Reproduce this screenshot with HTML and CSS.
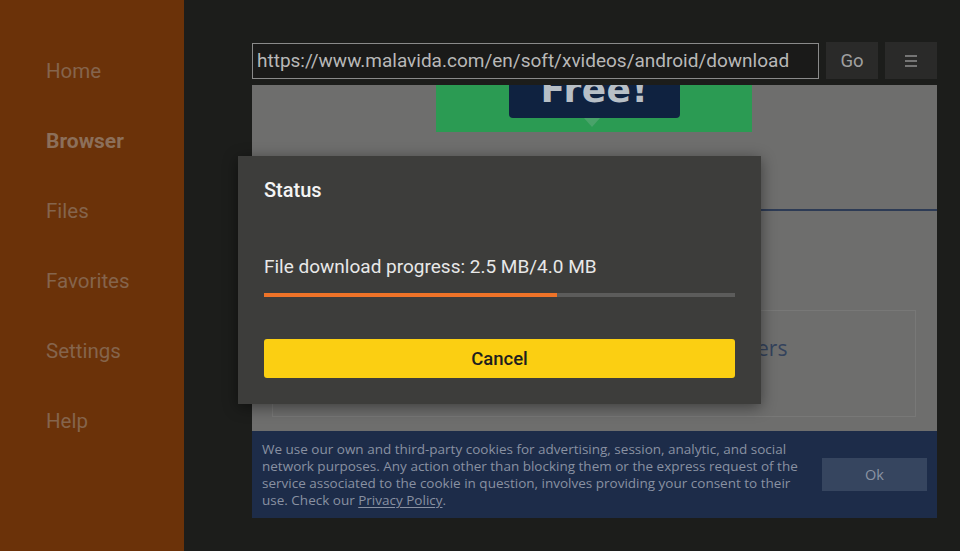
FILE: index.html
```html
<!DOCTYPE html>
<html lang="en">
<head>
<meta charset="utf-8">
<title>Downloader</title>
<link rel="stylesheet" href="styles.css">
</head>
<body>
<div class="app">
  <nav class="sidebar">
    <div class="nav-item">Home</div>
    <div class="nav-item active">Browser</div>
    <div class="nav-item">Files</div>
    <div class="nav-item">Favorites</div>
    <div class="nav-item">Settings</div>
    <div class="nav-item">Help</div>
  </nav>
  <main class="main">
    <div class="toolbar">
      <div class="url">https://www.malavida.com/en/soft/xvideos/android/download</div>
      <div class="tbtn">Go</div>
      <div class="tbtn">
        <svg width="14" height="14" viewBox="0 0 14 14"><path d="M1 2h12M1 7h12M1 12h12" stroke="#8f8f8f" stroke-width="1.6"/></svg>
      </div>
    </div>
    <div class="webview">
      <div class="banner">
        <div class="free"><span>Free!</span></div>
        <div class="tick"></div>
      </div>
      <div class="rule"></div>
      <div class="card"><span class="card-title">Browsers</span></div>
      <div class="cookies">
        <p class="cookie-text">We use our own and third-party cookies for advertising, session, analytic, and social network purposes. Any action other than blocking them or the express request of the service associated to the cookie in question, involves providing your consent to their use. Check our <u>Privacy Policy</u>.</p>
        <div class="ok">Ok</div>
      </div>
    </div>
  </main>
  <div class="dialog">
    <div class="dlg-title">Status</div>
    <div class="dlg-text">File download progress: 2.5 MB/4.0 MB</div>
    <div class="track"><div class="fill" style="width:62.2%"></div></div>
    <div class="cancel">Cancel</div>
  </div>
</div>
</body>
</html>
```
FILE: styles.css
```css
* { box-sizing: border-box; }
html, body { margin: 0; padding: 0; }
body {
  width: 960px;
  height: 551px;
  overflow: hidden;
  background: #1c1d1b;
  font-family: Roboto, "Noto Sans", sans-serif;
}
.app {
  position: relative;
  display: flex;
  width: 960px;
  height: 551px;
}
.sidebar {
  width: 184px;
  flex: none;
  background: #6b3209;
  padding: 59px 0 0 46px;
  display: flex;
  flex-direction: column;
  gap: 46px;
}
.nav-item {
  font-size: 20.5px;
  line-height: 24px;
  color: #85644c;
}
.nav-item.active {
  font-weight: 700;
  font-size: 21px;
  color: #8c6f5a;
}
.main {
  flex: 1;
  padding: 42px 23px 0 68px;
  display: flex;
  flex-direction: column;
}
.toolbar {
  display: flex;
  gap: 7px;
  height: 37px;
}
.url {
  width: 567px;
  height: 36px;
  margin-top: 1px;
  border: 1px solid #8a8a8a;
  background: #1a1a19;
  color: #b8b8b8;
  font-size: 19px;
  line-height: 34px;
  padding-left: 4px;
  white-space: nowrap;
  overflow: hidden;
}
.tbtn {
  width: 52px;
  height: 37px;
  background: #2a2a29;
  color: #a0a0a0;
  font-size: 18.5px;
  display: flex;
  align-items: center;
  justify-content: center;
}
.webview {
  margin-top: 6px;
  height: 433px;
  background: #6e6e6d;
  display: flex;
  flex-direction: column;
  overflow: hidden;
}
.banner {
  margin-left: 184px;
  width: 316px;
  height: 47px;
  background: #2b9b53;
  flex: none;
  display: flex;
  flex-direction: column;
}
.free {
  margin-left: 73px;
  width: 171px;
  height: 33px;
  background: #0f2240;
  border-radius: 0 0 4px 4px;
  overflow: hidden;
  display: flex;
  align-items: flex-end;
  justify-content: center;
}
.free span {
  font-family: "DejaVu Sans", sans-serif;
  font-weight: 700;
  font-size: 36px;
  line-height: 36px;
  color: #b7bfc6;
  margin-bottom: 10px;
  letter-spacing: 0.5px;
}
.tick {
  margin-left: 148px;
  width: 0;
  height: 0;
  border-left: 8px solid transparent;
  border-right: 8px solid transparent;
  border-top: 9px solid #5ea97a;
  opacity: .6;
}
.rule {
  margin-top: 77px;
  height: 2px;
  background: #2d3b55;
  flex: none;
}
.card {
  margin: 99px 21px 0 20px;
  height: 107px;
  border: 1px solid #787877;
  flex: none;
  padding: 23px 0 0 423px;
}
.card-title {
  font-family: "Open Sans", sans-serif;
  font-size: 21px;
  color: #33425c;
}
.cookies {
  margin-top: 14px;
  height: 87px;
  flex: none;
  background: #1d2c49;
  display: flex;
  align-items: center;
  justify-content: space-between;
  padding: 0 10px;
}
.cookie-text {
  margin: 0;
  width: 540px;
  font-family: "Open Sans", "Liberation Sans Narrow", sans-serif;
  font-stretch: 88%;
  font-size: 13.5px;
  line-height: 17px;
  color: #8991a2;
}
.cookie-text u { text-underline-offset: 2px; }
.ok {
  width: 105px;
  height: 33px;
  background: #36455f;
  color: #8a93a3;
  font-family: "Open Sans", sans-serif;
  font-stretch: 88%;
  font-size: 14.5px;
  display: flex;
  align-items: center;
  justify-content: center;
}
.dialog {
  position: absolute;
  left: 238px;
  top: 156px;
  width: 523px;
  height: 248px;
  background: #3d3d3b;
  box-shadow: 0 3px 14px rgba(0,0,0,.45);
  padding: 22px 26px 26px;
  display: flex;
  flex-direction: column;
}
.dlg-title {
  font-size: 20px;
  line-height: 24px;
  font-weight: 500;
  color: #f4f4f4;
}
.dlg-text {
  margin-top: 53px;
  font-size: 19px;
  line-height: 24px;
  color: #e8e8e8;
}
.track {
  margin-top: 14px;
  height: 4px;
  background: #5c5c5b;
}
.fill {
  height: 4px;
  background: #ee7328;
}
.cancel {
  margin-top: 42px;
  height: 39px;
  background: #fbcf12;
  border-radius: 3px;
  color: #1e1e1e;
  font-size: 18.5px;
  font-weight: 500;
  display: flex;
  align-items: center;
  justify-content: center;
}
```
